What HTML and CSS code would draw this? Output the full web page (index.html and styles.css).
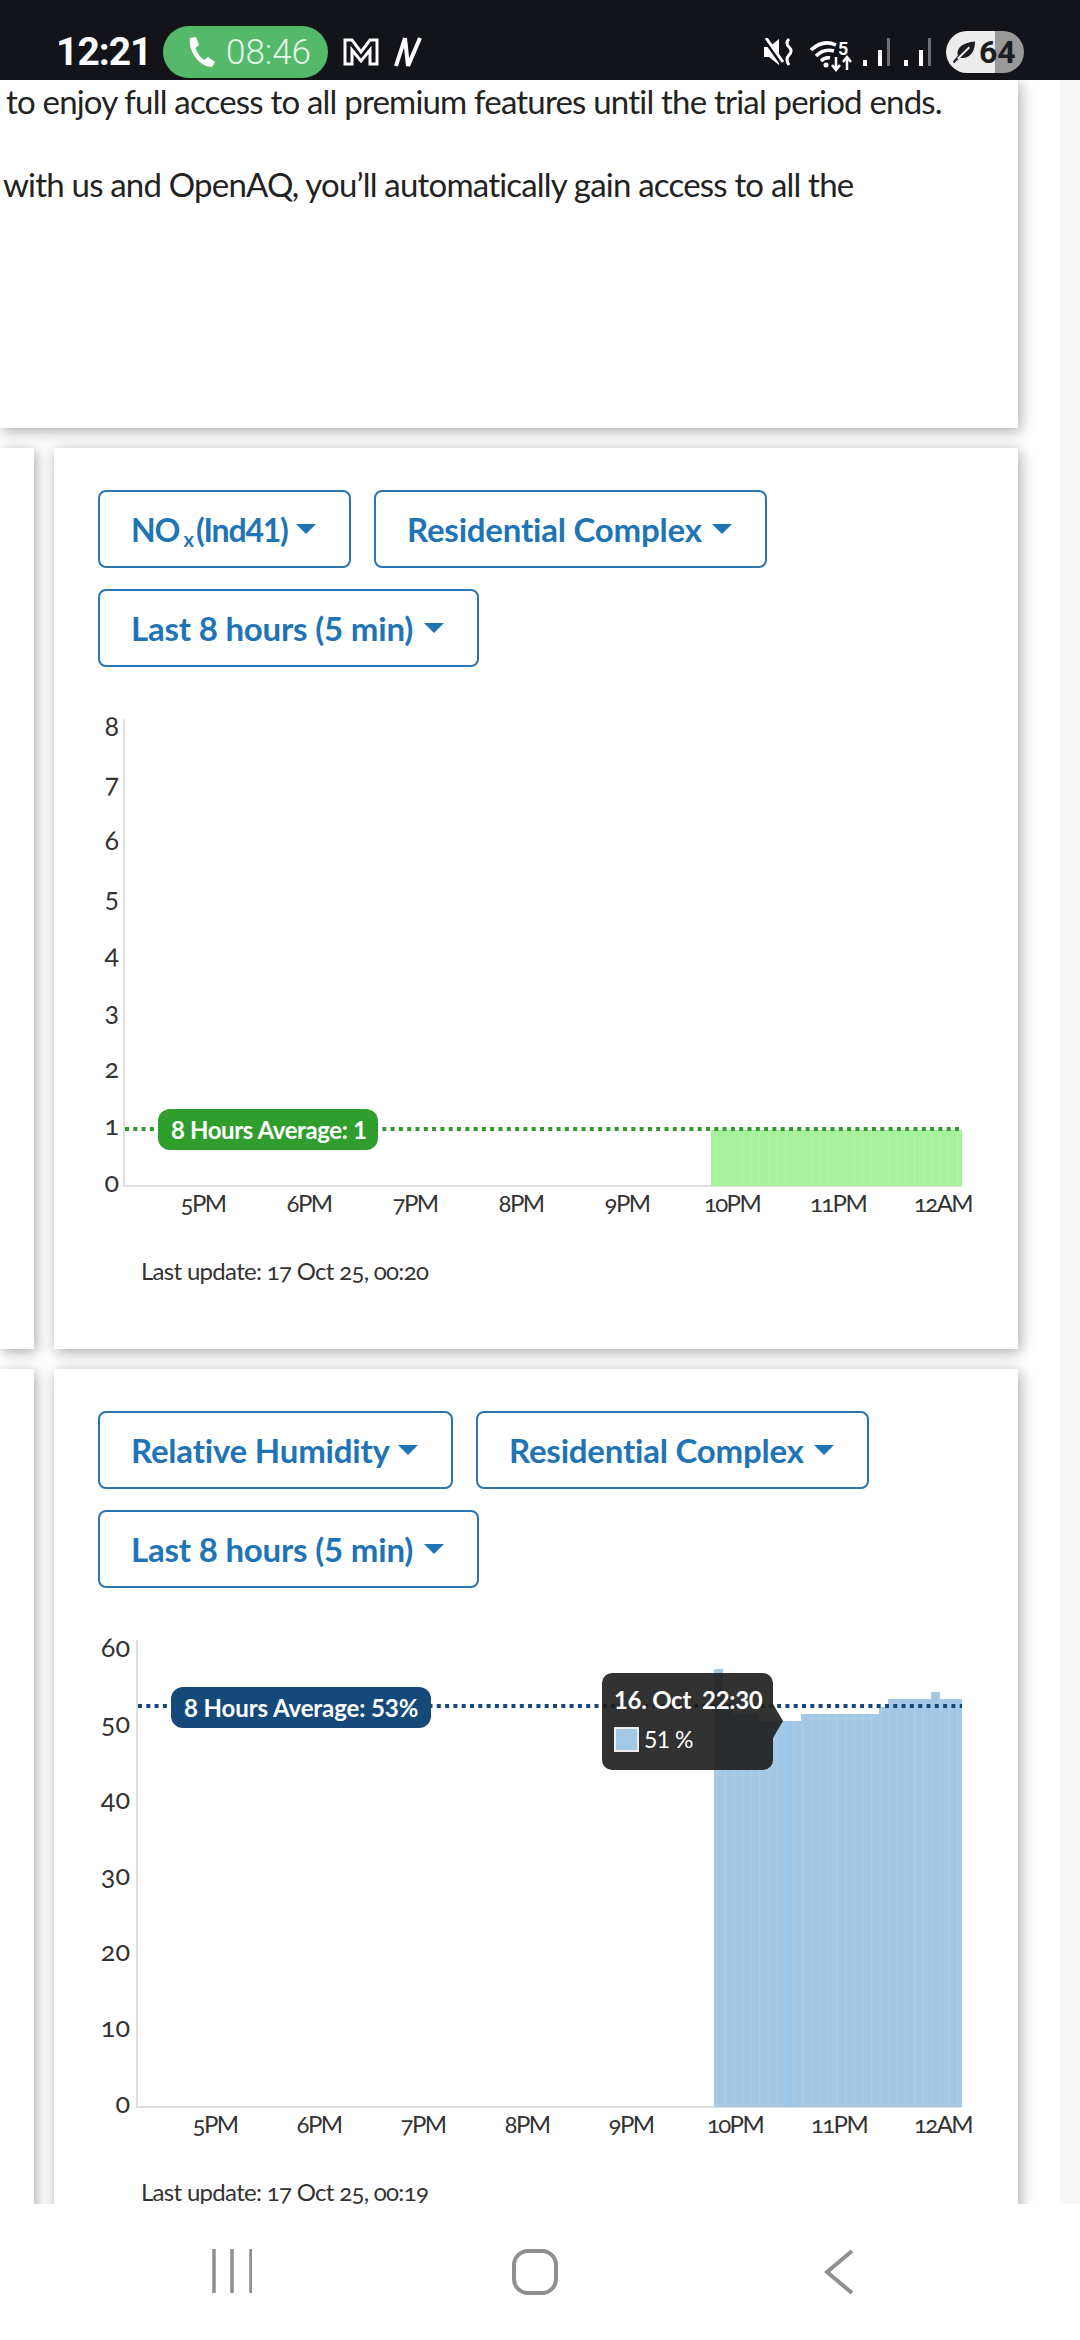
FILE: index.html
```html
<!DOCTYPE html>
<html lang="en">

<head>
    <meta charset="UTF-8">
    <meta name="viewport" content="width=device-width, initial-scale=1.0">
    <title>Air quality dashboard</title>
    <link rel="stylesheet" href="styles.css">
</head>

<body>
    <div class="statusbar">
        <div class="status-left">
            <span class="clock">12:21</span>
            <span class="call">
                <svg width="30" height="32" viewBox="0 0 30 32"><path d="M4 2 L10 1 L13 9 L9.500 12 C11 17 14 21 18 24 L22 21 L29 26 L26 31 C14 31 2 16 4 2 Z" fill="#fff"/></svg>
                08:46
            </span>
            <svg class="ic-m" width="36" height="28" viewBox="0 0 36 28"><path d="M2 2 H9 L18 14 L27 2 H34 V26 H27 V12 L18 23 L9 12 V26 H2 Z" fill="none" stroke="#fff" stroke-width="3"/></svg>
            <svg class="ic-n" width="28" height="32" viewBox="0 0 28 32"><path d="M2 30 L11 2 M11 2 L14 30 M14 30 L26 2" fill="none" stroke="#fff" stroke-width="4"/></svg>
        </div>
        <div class="status-right">
            <svg width="30" height="28" viewBox="0 0 30 28"><path d="M0 9 H5 L15 1 V27 L5 19 H0 Z" fill="#fff"/><path d="M1 1 L18 25" stroke="#12141a" stroke-width="5"/><path d="M2 0 L19 24" stroke="#fff" stroke-width="3"/><path d="M25 1 Q21 5 25 9 Q29 13 25 17 Q21 21 25 27" fill="none" stroke="#fff" stroke-width="3"/></svg>
            <svg class="ic-wifi" width="44" height="36" viewBox="0 -4 44 36"><path d="M1 10 Q13 -1 26 5 M6 16 Q14 8 24 11 M11 21 Q15 17 20 18" fill="none" stroke="#fff" stroke-width="3.500"/><circle cx="16" cy="25" r="2.500" fill="#fff"/><text x="28" y="15" class="wifi-five">5</text><path d="M26 17 V29 M22 25 L26 30 L30 25 M37 30 V18 M33 22 L37 17 L41 22" fill="none" stroke="#fff" stroke-width="2.500"/></svg>
            <svg class="ic-signal" width="28" height="30" viewBox="0 0 28 30"><rect x="0" y="23" width="4" height="6" fill="#fff"/><rect x="15" y="13" width="4" height="16" fill="#fff"/><rect x="24" y="1" width="3" height="28" fill="#6d6f73"/></svg>
            <svg class="ic-signal" width="28" height="30" viewBox="0 0 28 30"><rect x="0" y="23" width="4" height="6" fill="#fff"/><rect x="15" y="13" width="4" height="16" fill="#fff"/><rect x="24" y="1" width="3" height="28" fill="#6d6f73"/></svg>
            <span class="battery">
                <svg width="23" height="26" viewBox="0 0 24 26"><path d="M5 17 C3 8 11 3 23 2 C23 13 17 21 7 19 L1 25 L0 23 Z" fill="#1b1d22"/><path d="M5 20 L17 8" stroke="#ececec" stroke-width="2"/></svg>
                <span>64</span>
            </span>
        </div>
    </div>

    <main class="content">
        <section class="card intro">
            <p class="intro-one">to enjoy full access to all premium features until the trial period ends.</p>
            <p class="intro-two">with us and OpenAQ, you’ll automatically gain access to all the</p>
        </section>

        <div class="row">
            <div class="card stub"></div>
            <section class="card panel">
                <div class="filters">
                    <button class="select sel-nox">NO<sub>x</sub>(Ind41)<i class="caret"></i></button>
                    <button class="select sel-site">Residential Complex<i class="caret"></i></button>
                    <button class="select sel-range">Last 8 hours (5 min)<i class="caret"></i></button>
                </div>
                <div class="chart">
                    <svg class="plot" width="964" height="530" viewBox="0 0 964 530">
                        <defs>
                            <pattern id="stripes" width="8.600" height="10" patternUnits="userSpaceOnUse"><rect width="1" height="10" fill="#fff" opacity="0.1"/></pattern>
                        </defs>
                        <path d="M70 19 V486 H908" class="axis"/>
                        <rect x="657" y="430" width="251" height="56" fill="#a6f29a"/>
                        <rect x="657" y="430" width="251" height="56" fill="url(#stripes)"/>
                        <line x1="71" y1="429" x2="908" y2="429" class="avg avg-green"/>
                        <g class="ticks-y">
                            <text x="65" y="36">8</text><text x="65" y="93">7</text><text x="65" y="150">6</text><text x="65" y="207">5</text><text x="65" y="264">4</text><text x="65" y="321">3</text><text x="65" y="378">2</text><text x="65" y="435">1</text><text x="65" y="492">0</text>
                        </g>
                        <g class="ticks-x">
                            <text x="149" y="512">5PM</text><text x="255" y="512">6PM</text><text x="361" y="512">7PM</text><text x="467" y="512">8PM</text><text x="573" y="512">9PM</text><text x="678" y="512">10PM</text><text x="784" y="512">11PM</text><text x="889" y="512">12AM</text>
                        </g>
                    </svg>
                    <span class="avg-pill pill-green">8 Hours Average: 1</span>
                </div>
                <p class="updated">Last update: 17 Oct 25, 00:20</p>
            </section>
        </div>

        <div class="row">
            <div class="card stub"></div>
            <section class="card panel">
                <div class="filters">
                    <button class="select sel-rh">Relative Humidity<i class="caret"></i></button>
                    <button class="select sel-site">Residential Complex<i class="caret"></i></button>
                    <button class="select sel-range">Last 8 hours (5 min)<i class="caret"></i></button>
                </div>
                <div class="chart">
                    <svg class="plot" width="964" height="530" viewBox="0 0 964 530">
                        <path d="M83 19 V486 H908" class="axis"/>
                        <path d="M660 486 V48 H669 V82 H678 V93 H704 V100 H747 V93 H825 V86 H834 V78 H877 V71 H886 V78 H908 V486 Z" fill="#a3c8e6"/>
                        <rect x="730" y="100" width="8" height="386" fill="#9ac5e8"/>
                        <path d="M660 486 V48 H669 V82 H678 V93 H704 V100 H747 V93 H825 V86 H834 V78 H877 V71 H886 V78 H908 V486 Z" fill="url(#stripes)"/>
                        <line x1="84" y1="85" x2="908" y2="85" class="avg avg-navy"/>
                        <g class="ticks-y">
                            <text x="76" y="36">60</text><text x="76" y="112">50</text><text x="76" y="188">40</text><text x="76" y="264">30</text><text x="76" y="340">20</text><text x="76" y="416">10</text><text x="76" y="492">0</text>
                        </g>
                        <g class="ticks-x">
                            <text x="161" y="512">5PM</text><text x="265" y="512">6PM</text><text x="369" y="512">7PM</text><text x="473" y="512">8PM</text><text x="577" y="512">9PM</text><text x="681" y="512">10PM</text><text x="785" y="512">11PM</text><text x="889" y="512">12AM</text>
                        </g>
                    </svg>
                    <span class="avg-pill pill-navy">8 Hours Average: 53%</span>
                    <div class="tooltip">
                        <div class="tip-title">16. Oct&nbsp; 22:30</div>
                        <div class="tip-value"><i class="swatch"></i>51 %</div>
                    </div>
                </div>
                <p class="updated">Last update: 17 Oct 25, 00:19</p>
            </section>
        </div>
    </main>

    <nav class="navbar">
        <svg width="40" height="44" viewBox="0 0 40 44"><path d="M2 1 V43 M20 1 V43 M39 1 V43" fill="none" stroke="#8f8f8f" stroke-width="3.500" stroke-linecap="round"/></svg>
        <svg width="46" height="46" viewBox="0 0 46 46"><rect x="2" y="2" width="42" height="42" rx="14" fill="none" stroke="#8f8f8f" stroke-width="4"/></svg>
        <svg width="30" height="46" viewBox="0 0 30 46"><path d="M28 2 L3 23 L28 44" fill="none" stroke="#8f8f8f" stroke-width="4"/></svg>
    </nav>
</body>

</html>
```

FILE: styles.css
```css
* {
    margin: 0;
    padding: 0;
    box-sizing: border-box;
}

body {
    width: 1080px;
    height: 2340px;
    overflow: hidden;
    background: #fff;
    font-family: Lato, "Open Sans", sans-serif;
    color: #333;
}

/* status bar */
.statusbar {
    position: relative;
    z-index: 1;
    height: 80px;
    background: #12141a;
    display: flex;
    justify-content: space-between;
    align-items: flex-end;
    padding: 0 56px 2px 56px;
    color: #fff;
    font-family: Roboto, Inter, sans-serif;
}

.status-left,
.status-right {
    display: flex;
    align-items: center;
    height: 52px;
}

.clock {
    font-size: 39px;
    font-weight: 700;
    letter-spacing: -1px;
    width: 107px;
}

.call {
    width: 165px;
    height: 52px;
    border-radius: 26px;
    background: #55b96a;
    display: flex;
    align-items: center;
    padding-left: 23px;
    gap: 10px;
    font-size: 35px;
    font-weight: 300;
    color: #e6f5e9;
}

.ic-m {
    margin-left: 15px;
}

.ic-n {
    margin-left: 15px;
}

.status-right svg {
    flex: none;
}

.ic-wifi {
    margin-left: 16px;
    margin-top: 4px;
}

.wifi-five {
    font-size: 18px;
    font-weight: 700;
    fill: #fff;
}

.ic-signal {
    margin-left: 13px;
}

.ic-wifi + .ic-signal {
    margin-left: 9px;
}

.battery {
    width: 78px;
    height: 42px;
    margin-left: 14px;
    border-radius: 21px;
    background: linear-gradient(90deg, #ececec 49px, #999 49px);
    display: flex;
    align-items: center;
    padding-left: 7px;
    gap: 3px;
    color: #1b1d22;
    font-size: 32px;
    font-weight: 700;
}

/* scrolled page, the navbar paints over whatever runs past it */
.content {
    height: 2124px;
    background: linear-gradient(90deg, #fff 1060px, #f7f7f7 1060px);
}

.card {
    background: #fff;
    box-shadow: 2px 3px 14px rgba(0, 0, 0, 0.35);
}

.intro {
    width: 1018px;
    height: 348px;
    margin-bottom: 20px;
    font-size: 33px;
    letter-spacing: -0.8px;
    color: #222;
    white-space: nowrap;
}

.intro-one {
    padding: 0 0 0 6px;
    line-height: 42px;
}

.intro-two {
    padding: 41px 0 0 3px;
    line-height: 42px;
}

.row {
    display: grid;
    grid-template-columns: 34px 964px;
    gap: 20px;
    margin-bottom: 20px;
}

.panel {
    height: 901px;
    padding-top: 42px;
}

.filters {
    display: flex;
    flex-wrap: wrap;
    gap: 21px 23px;
    padding-left: 44px;
    width: 850px;
}

.select {
    height: 78px;
    background: #fff;
    border: 2px solid #2a76b1;
    border-radius: 8px;
    color: #1f74b5;
    font-family: inherit;
    font-size: 33px;
    font-weight: 700;
    letter-spacing: -0.2px;
    display: flex;
    align-items: center;
    justify-content: space-between;
    padding: 0 33px 0 31px;
    white-space: nowrap;
}

.select sub {
    font-size: 20px;
    line-height: 0;
    margin: 20px -5px 0 -4px;
}

.sel-nox {
    width: 253px;
    font-size: 32px;
    letter-spacing: -1.2px;
}

.sel-site {
    width: 393px;
}

.sel-rh {
    width: 355px;
}

.sel-range {
    width: 381px;
}

.caret {
    border-left: 10px solid transparent;
    border-right: 10px solid transparent;
    border-top: 10px solid #1f74b5;
}

/* charts */
.chart {
    position: relative;
    height: 530px;
    margin-top: 33px;
}

.plot {
    display: block;
}

.axis {
    fill: none;
    stroke: #e0e0e0;
    stroke-width: 2;
}

.avg {
    stroke-width: 4;
    stroke-dasharray: 4 4.300;
}

.avg-green {
    stroke: #2f9a2b;
}

.avg-navy {
    stroke: #15497a;
}

.ticks-y text,
.ticks-x text {
    font-size: 27px;
    fill: #333;
    font-variant-numeric: oldstyle-nums;
}

.ticks-y text {
    text-anchor: end;
}

.ticks-x text {
    text-anchor: middle;
    font-size: 24px;
    letter-spacing: -1.6px;
}

.avg-pill {
    position: absolute;
    height: 41px;
    border-radius: 12px;
    padding: 0 13px;
    line-height: 41px;
    color: #fff;
    font-size: 24px;
    font-weight: 700;
    letter-spacing: -0.4px;
    white-space: nowrap;
}

.pill-green {
    left: 104px;
    top: 409px;
    width: 220px;
    background: #2f9e2c;
}

.pill-navy {
    left: 117px;
    top: 66px;
    width: 260px;
    letter-spacing: -0.1px;
    background: #15497a;
}

.tooltip {
    position: absolute;
    left: 548px;
    top: 52px;
    width: 171px;
    height: 97px;
    padding: 9px 12px;
    border-radius: 10px;
    background: rgba(30, 30, 30, 0.91);
    color: #fff;
}

.tooltip::after {
    content: "";
    position: absolute;
    left: 171px;
    top: 31px;
    border-top: 17px solid transparent;
    border-bottom: 17px solid transparent;
    border-left: 10px solid rgba(30, 30, 30, 0.91);
}

.tip-title {
    font-size: 24px;
    font-weight: 700;
    letter-spacing: -0.3px;
    line-height: 36px;
    white-space: nowrap;
}

.tip-value {
    display: flex;
    align-items: center;
    gap: 5px;
    margin-top: 6px;
    font-size: 23px;
    letter-spacing: -0.5px;
    line-height: 30px;
}

.swatch {
    width: 25px;
    height: 25px;
    background: #a3c8e6;
    border: 2px solid #eee;
}

.updated {
    margin-top: 28px;
    padding-left: 87px;
    font-size: 24px;
    letter-spacing: -0.7px;
    line-height: 26px;
    color: #333;
    font-variant-numeric: oldstyle-nums;
}

/* bottom navigation */
.navbar {
    position: relative;
    z-index: 1;
    height: 136px;
    background: #fff;
    display: grid;
    grid-template-columns: 212px 40px 260px 46px 266px 30px;
    align-items: start;
    padding-top: 45px;
}

.navbar svg:nth-child(1) {
    grid-column: 2;
}

.navbar svg:nth-child(2) {
    grid-column: 4;
}

.navbar svg:nth-child(3) {
    grid-column: 6;
}
```
